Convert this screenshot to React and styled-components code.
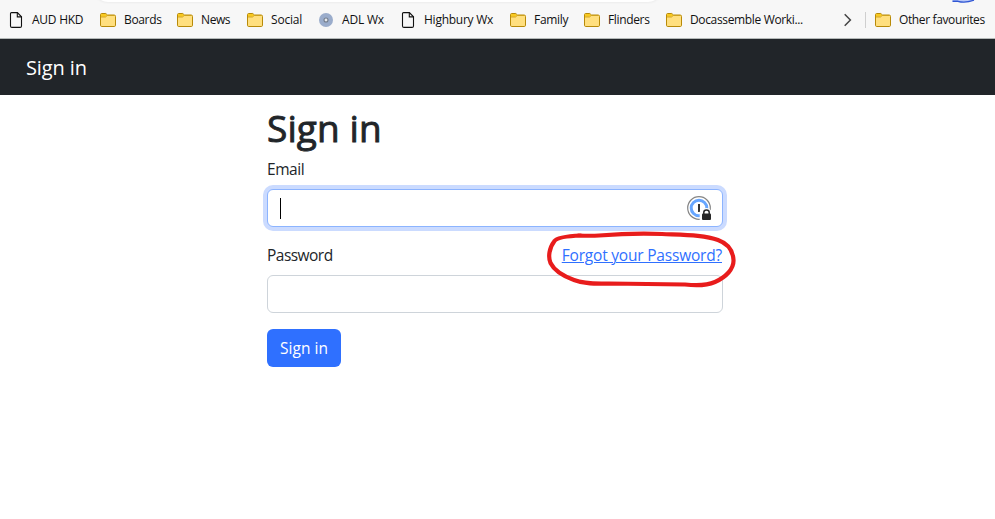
import React from "react";
import styled, { createGlobalStyle } from "styled-components";

const GlobalStyle = createGlobalStyle`
  *, *::before, *::after { box-sizing: border-box; }
  body {
    margin: 0;
    background: #fff;
    color: #212529;
    font-family: "Segoe UI", "Open Sans", "Noto Sans", sans-serif;
    font-size: 15.5px;
    line-height: 24px;
    overflow: hidden;
  }
`;

const Page = styled.div`
  height: 519px;
  overflow: hidden;
`;

const BrowserBar = styled.div`
  position: relative;
  height: 39px;
  padding: 8px 0 0 8px;
  background: #f7f7f7;
  border-bottom: 1px solid #b4b9b8;
  overflow: hidden;
`;

const AddressBarEdge = styled.div`
  position: absolute;
  top: -26px;
  left: 94px;
  width: 568px;
  height: 28px;
  border-radius: 14px;
  background: #fff;
  box-shadow: 0 0 3px rgba(0, 0, 0, 0.09);
`;

const ToolbarMark = styled.svg`
  position: absolute;
  top: 0;
  left: 950px;
`;

const Bookmarks = styled.div`
  display: flex;
  align-items: center;
  height: 24px;
`;

const Bookmark = styled.div`
  display: flex;
  flex: none;
  align-items: center;
  gap: 8px;
  width: ${(p) => p.$width}px;
  color: #111;
  font-size: 12px;
  line-height: 16px;
  letter-spacing: ${(p) => p.$tracking}px;
  white-space: nowrap;

  svg { flex: none; }
`;

const Overflow = styled.div`
  display: flex;
  flex: none;
  width: 30px;
  height: 16px;
  margin-right: 9px;
  border-right: 1px solid #cfcfcf;
`;

const Navbar = styled.nav`
  height: 56px;
  padding: 14px 26px;
  background: #212529;
  color: #fff;
  font-size: 20px;
  line-height: 30px;
  letter-spacing: ${(p) => p.$tracking}px;
`;

const Form = styled.main`
  width: 456px;
  margin-left: 267px;
  padding-top: 9px;
`;

const Title = styled.h1`
  margin: 0 0 5px;
  font-size: 37px;
  font-weight: 500;
  line-height: 48px;
  letter-spacing: ${(p) => p.$tracking}px;
  -webkit-text-stroke: 0.9px #212529;
`;

const LabelRow = styled.div`
  display: flex;
  justify-content: space-between;
  margin-bottom: 8px;
  white-space: nowrap;
`;

const Label = styled.label`
  letter-spacing: ${(p) => p.$tracking}px;
`;

const ForgotLink = styled.a`
  position: relative;
  margin-right: 1px;
  color: #2f70ff;
  letter-spacing: ${(p) => p.$tracking}px;
  text-decoration: underline;
  text-decoration-thickness: 1px;
  text-underline-offset: 1px;
`;

const Circled = styled.svg`
  position: absolute;
  top: -12px;
  right: -15px;
  pointer-events: none;
`;

const Field = styled.div`
  display: flex;
  align-items: center;
  justify-content: space-between;
  height: 38px;
  margin-bottom: 16px;
  padding: 0 10px 0 12px;
  border: 1px solid ${(p) => (p.$focused ? "#8cb4ff" : "#ced4da")};
  border-radius: 6px;
  background: #fff;
  box-shadow: ${(p) => (p.$focused ? "0 0 0 4px #cbdbff" : "none")};
`;

const Caret = styled.span`
  width: 1px;
  height: 21px;
  background: #000;
`;

const SubmitButton = styled.button`
  display: block;
  width: 74px;
  height: 38px;
  padding: 0;
  border: 0;
  border-radius: 6px;
  background: #2f70ff;
  color: #fff;
  font: inherit;
  letter-spacing: ${(p) => p.$tracking}px;
  white-space: nowrap;
`;

const PageIcon = () => (
  <svg width="16" height="16" viewBox="0 0 16 16" fill="none" stroke="#111" strokeWidth="1.1">
    <path d="M3.5.6h5.9l4.1 4.2v9.1q0 1.5-1.5 1.5H4q-1.5 0-1.5-1.5V1.6q0-1 1-1z" />
    <path d="M9.3.8v4.1h4.1" />
  </svg>
);

const FolderIcon = () => (
  <svg width="16" height="16" viewBox="0 0 16 16">
    <path d="M1.7 1.5h4.1l1.7 1.6h6.8q1.2 0 1.2 1.2v8.9q0 1.3-1.2 1.3H1.7Q.5 14.5.5 13.2V2.7q0-1.2 1.2-1.2z" fill="#ffdf7e" stroke="#b88a08" />
    <path d="M1 4.8V2.7Q1 2 1.8 2h3.8l1.6 1.4-1.7 1.4z" fill="#f8c91f" />
    <path d="M.8 5h4.7l1.9-1.7h6.8" fill="none" stroke="#c99a12" strokeWidth=".8" />
  </svg>
);

const DiscIcon = () => (
  <svg width="16" height="16" viewBox="0 0 16 16">
    <circle cx="8" cy="8" r="7" fill="#9aaccb" />
    <circle cx="8" cy="8" r="2" fill="#e6e9ee" stroke="#737d8c" strokeWidth="1.1" />
  </svg>
);

const PasswordManagerIcon = () => (
  <svg width="25" height="25" viewBox="0 0 25 25">
    <circle cx="12" cy="12" r="11.3" fill="#fff" stroke="#858585" strokeWidth="1.2" />
    <circle cx="12" cy="12" r="7.8" fill="none" stroke="#67a6ff" strokeWidth="3" />
    <path d="M12 8v8" stroke="#333" strokeWidth="2" />
    <path d="M12.7 25v-9.4h2.2q.4-3.6 4.5-3.6 3 0 4.2 2.2H25V25z" fill="#fff" />
    <rect x="15" y="17.6" width="9" height="6.4" rx="1" fill="#282828" />
    <path d="M16.8 18v-1.8q0-2.3 2.7-2.3t2.7 2.3V18" fill="none" stroke="#282828" strokeWidth="1.5" />
  </svg>
);

const icons = { page: PageIcon, folder: FolderIcon, disc: DiscIcon };

const bookmarks = [
  { label: "AUD HKD", icon: "page", width: 92, tracking: -0.25 },
  { label: "Boards", icon: "folder", width: 77, tracking: -0.35 },
  { label: "News", icon: "folder", width: 70, tracking: -0.4 },
  { label: "Social", icon: "folder", width: 71, tracking: -0.2 },
  { label: "ADL Wx", icon: "disc", width: 82, tracking: -0.2 },
  { label: "Highbury Wx", icon: "page", width: 110, tracking: -0.25 },
  { label: "Family", icon: "folder", width: 74, tracking: -0.3 },
  { label: "Flinders", icon: "folder", width: 82, tracking: -0.35 },
  { label: "Docassemble Worki...", icon: "folder", width: 170, tracking: -0.35 },
];

function BookmarkItem({ label, icon, width, tracking }) {
  const Icon = icons[icon];
  return (
    <Bookmark $width={width} $tracking={tracking}>
      <Icon />
      <span>{label}</span>
    </Bookmark>
  );
}

export default function App() {
  return (
    <Page>
      <GlobalStyle />
      <BrowserBar>
        <AddressBarEdge />
        <ToolbarMark width="28" height="4" viewBox="0 0 28 4">
          <path d="M2.500 0v1.300H8Q15 3.500 24 .5V0z" fill="#b9c8f8" />
          <path d="M2.500 1.300H8Q15 3.400 24 .2" fill="none" stroke="#3157d4" strokeWidth="1.400" />
        </ToolbarMark>
        <Bookmarks>
          {bookmarks.map((b) => (
            <BookmarkItem key={b.label} {...b} />
          ))}
          <Overflow>
            <svg width="16" height="16" viewBox="0 0 16 16" fill="none" stroke="#444" strokeWidth="1.5">
              <path d="M8.7 2.2l5.7 5.8-5.7 5.8" />
            </svg>
          </Overflow>
          <BookmarkItem label="Other favourites" icon="folder" width={112} tracking={-0.37} />
        </Bookmarks>
      </BrowserBar>
      <Navbar $tracking={-0.1}>Sign in</Navbar>
      <Form>
        <Title $tracking={0.1}>Sign in</Title>
        <LabelRow>
          <Label $tracking={-0.45}>Email</Label>
        </LabelRow>
        <Field $focused>
          <Caret />
          <PasswordManagerIcon />
        </Field>
        <LabelRow>
          <Label $tracking={-0.53}>Password</Label>
          <ForgotLink $tracking={-0.2}>
            Forgot your Password?
            <Circled width="192" height="58" viewBox="544 231 192 58" fill="none" stroke="#e81c1c" strokeWidth="4.2" strokeLinecap="round" strokeLinejoin="round">
              <path d="M580 235.5C568 236 556 237 553.5 241C548 248 547 257 549.5 263C553 270 562 276 573 280C583 284 594 284 608 283.5L684 284.5C697 286 706 285.500 714 282C725 277 733 269 732.500 260C732 251 728 244 717 240C704 235 684 235 661 234C636 233 617 234 598 235.500Q590 236 577 235.500" />
            </Circled>
          </ForgotLink>
        </LabelRow>
        <Field />
        <SubmitButton $tracking={0}>Sign in</SubmitButton>
      </Form>
    </Page>
  );
}
